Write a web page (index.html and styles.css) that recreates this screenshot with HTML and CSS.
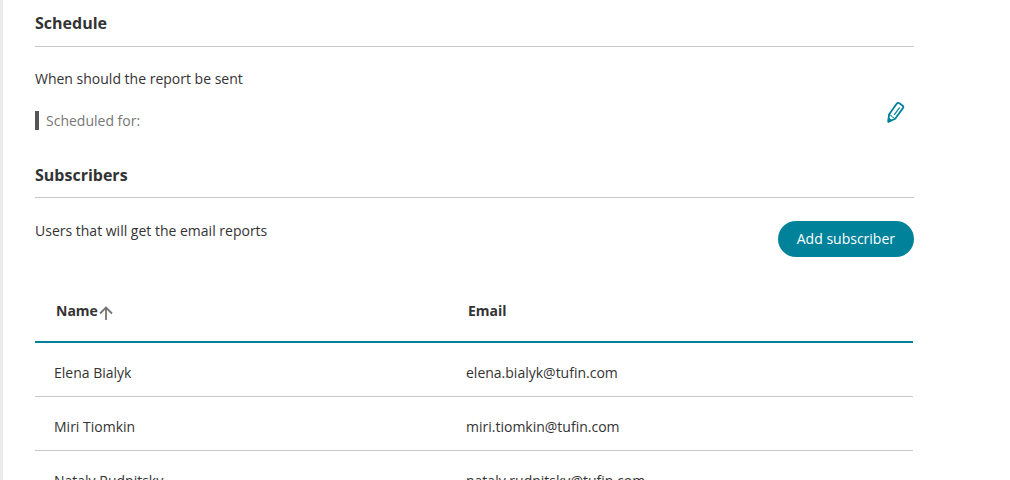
FILE: index.html
```html
<!DOCTYPE html>
<html lang="en">
<head>
<meta charset="utf-8">
<title>Report schedule</title>
<link rel="stylesheet" href="styles.css">
</head>
<body>
<main class="panel">
  <section class="schedule">
    <h2 class="section-title">Schedule</h2>
    <p class="section-text">When should the report be sent</p>
    <div class="schedule-row">
      <p class="schedule-value">Scheduled for:</p>
      <button class="edit-button" type="button" aria-label="Edit schedule">
        <svg width="20" height="24" viewBox="0 0 20 24" fill="none" stroke="currentColor" stroke-width="1.8" stroke-linejoin="round" stroke-linecap="round" aria-hidden="true">
          <path d="M3 14.5 10.7 3.8Q11.8 2.3 13.4 3.3L16.4 5.4Q18 6.5 16.9 8.1L9.2 18.7 2.4 21.9Z"/>
          <path d="M3 14.5Q6 15 6.2 17 8 17 9.2 18.7" stroke-width="1"/>
          <path d="M8.4 14.6 13.4 7.8" stroke-width="1.2"/>
          <path d="M2.6 18 5.6 20.3 2.4 21.9Z" fill="currentColor" stroke-width="1"/>
        </svg>
      </button>
    </div>
  </section>
  <section class="subscribers">
    <h2 class="section-title">Subscribers</h2>
    <div class="subscribers-bar">
      <p class="section-text">Users that will get the email reports</p>
      <button class="add-button" type="button">Add subscriber</button>
    </div>
    <table class="subscriber-table">
      <thead>
        <tr>
          <th class="name-column" scope="col" aria-sort="ascending">
            <span class="sort-label">Name
              <svg width="14" height="14" viewBox="0 0 14 14" fill="none" stroke="#757575" stroke-width="1.8" aria-hidden="true"><path d="M7 14V1.5M1 7.5 7 1.5 13 7.5"/></svg>
            </span>
          </th>
          <th scope="col">Email</th>
        </tr>
      </thead>
      <tbody>
        <tr><td>Elena Bialyk</td><td>elena.bialyk@tufin.com</td></tr>
        <tr><td>Miri Tiomkin</td><td>miri.tiomkin@tufin.com</td></tr>
        <tr><td>Nataly Rudnitsky</td><td>nataly.rudnitsky@tufin.com</td></tr>
      </tbody>
    </table>
  </section>
</main>
</body>
</html>
```
FILE: styles.css
```css
* {
  box-sizing: border-box;
}

body {
  margin: 0;
  height: 100vh;
  overflow: hidden;
  background: #fff;
  color: #333;
  font: 14px/20px "Open Sans", "Noto Sans", sans-serif;
}

.panel {
  min-height: 100vh;
  padding: 11px 96px 0 32px;
  border-left: 3px solid #ebebeb;
}

.section-title {
  margin: 0;
  padding-bottom: 11px;
  border-bottom: 1px solid #c8c8c8;
  font-size: 16px;
  line-height: 24px;
}

.section-text {
  margin: 0;
}

.schedule .section-text {
  margin-top: 22px;
}

.schedule-row {
  display: flex;
  align-items: flex-end;
  justify-content: space-between;
  padding: 11px 8px 0 0;
}

.schedule-value {
  margin: 0;
  padding-left: 7px;
  border-left: 4px solid #555;
  color: #777;
  line-height: 19px;
}

.edit-button {
  display: flex;
  margin-bottom: 6px;
  padding: 0;
  border: 0;
  background: none;
  color: #00829b;
  cursor: pointer;
}

.subscribers {
  margin-top: 33px;
}

.subscribers .section-title {
  padding-bottom: 10px;
}

.subscribers-bar {
  display: flex;
  align-items: flex-start;
  justify-content: space-between;
  padding-top: 23px;
}

.add-button {
  height: 36px;
  padding: 0 19px;
  border: 0;
  border-radius: 18px;
  background: #00829b;
  color: #fff;
  font: inherit;
  cursor: pointer;
}

.subscriber-table {
  width: calc(100% - 1px);
  margin-top: 24px;
  border-collapse: separate;
  border-spacing: 0;
  table-layout: fixed;
}

.name-column {
  width: 412px;
}

.subscriber-table th {
  height: 62px;
  padding: 0 21px;
  border-bottom: 2px solid #00829b;
  text-align: left;
}

.sort-label {
  display: flex;
  align-items: center;
  gap: 1px;
}

.sort-label svg {
  margin-top: 4px;
}

.subscriber-table td {
  height: 54px;
  padding: 6px 19px 0;
  border-bottom: 1px solid #c8c8c8;
}
```
